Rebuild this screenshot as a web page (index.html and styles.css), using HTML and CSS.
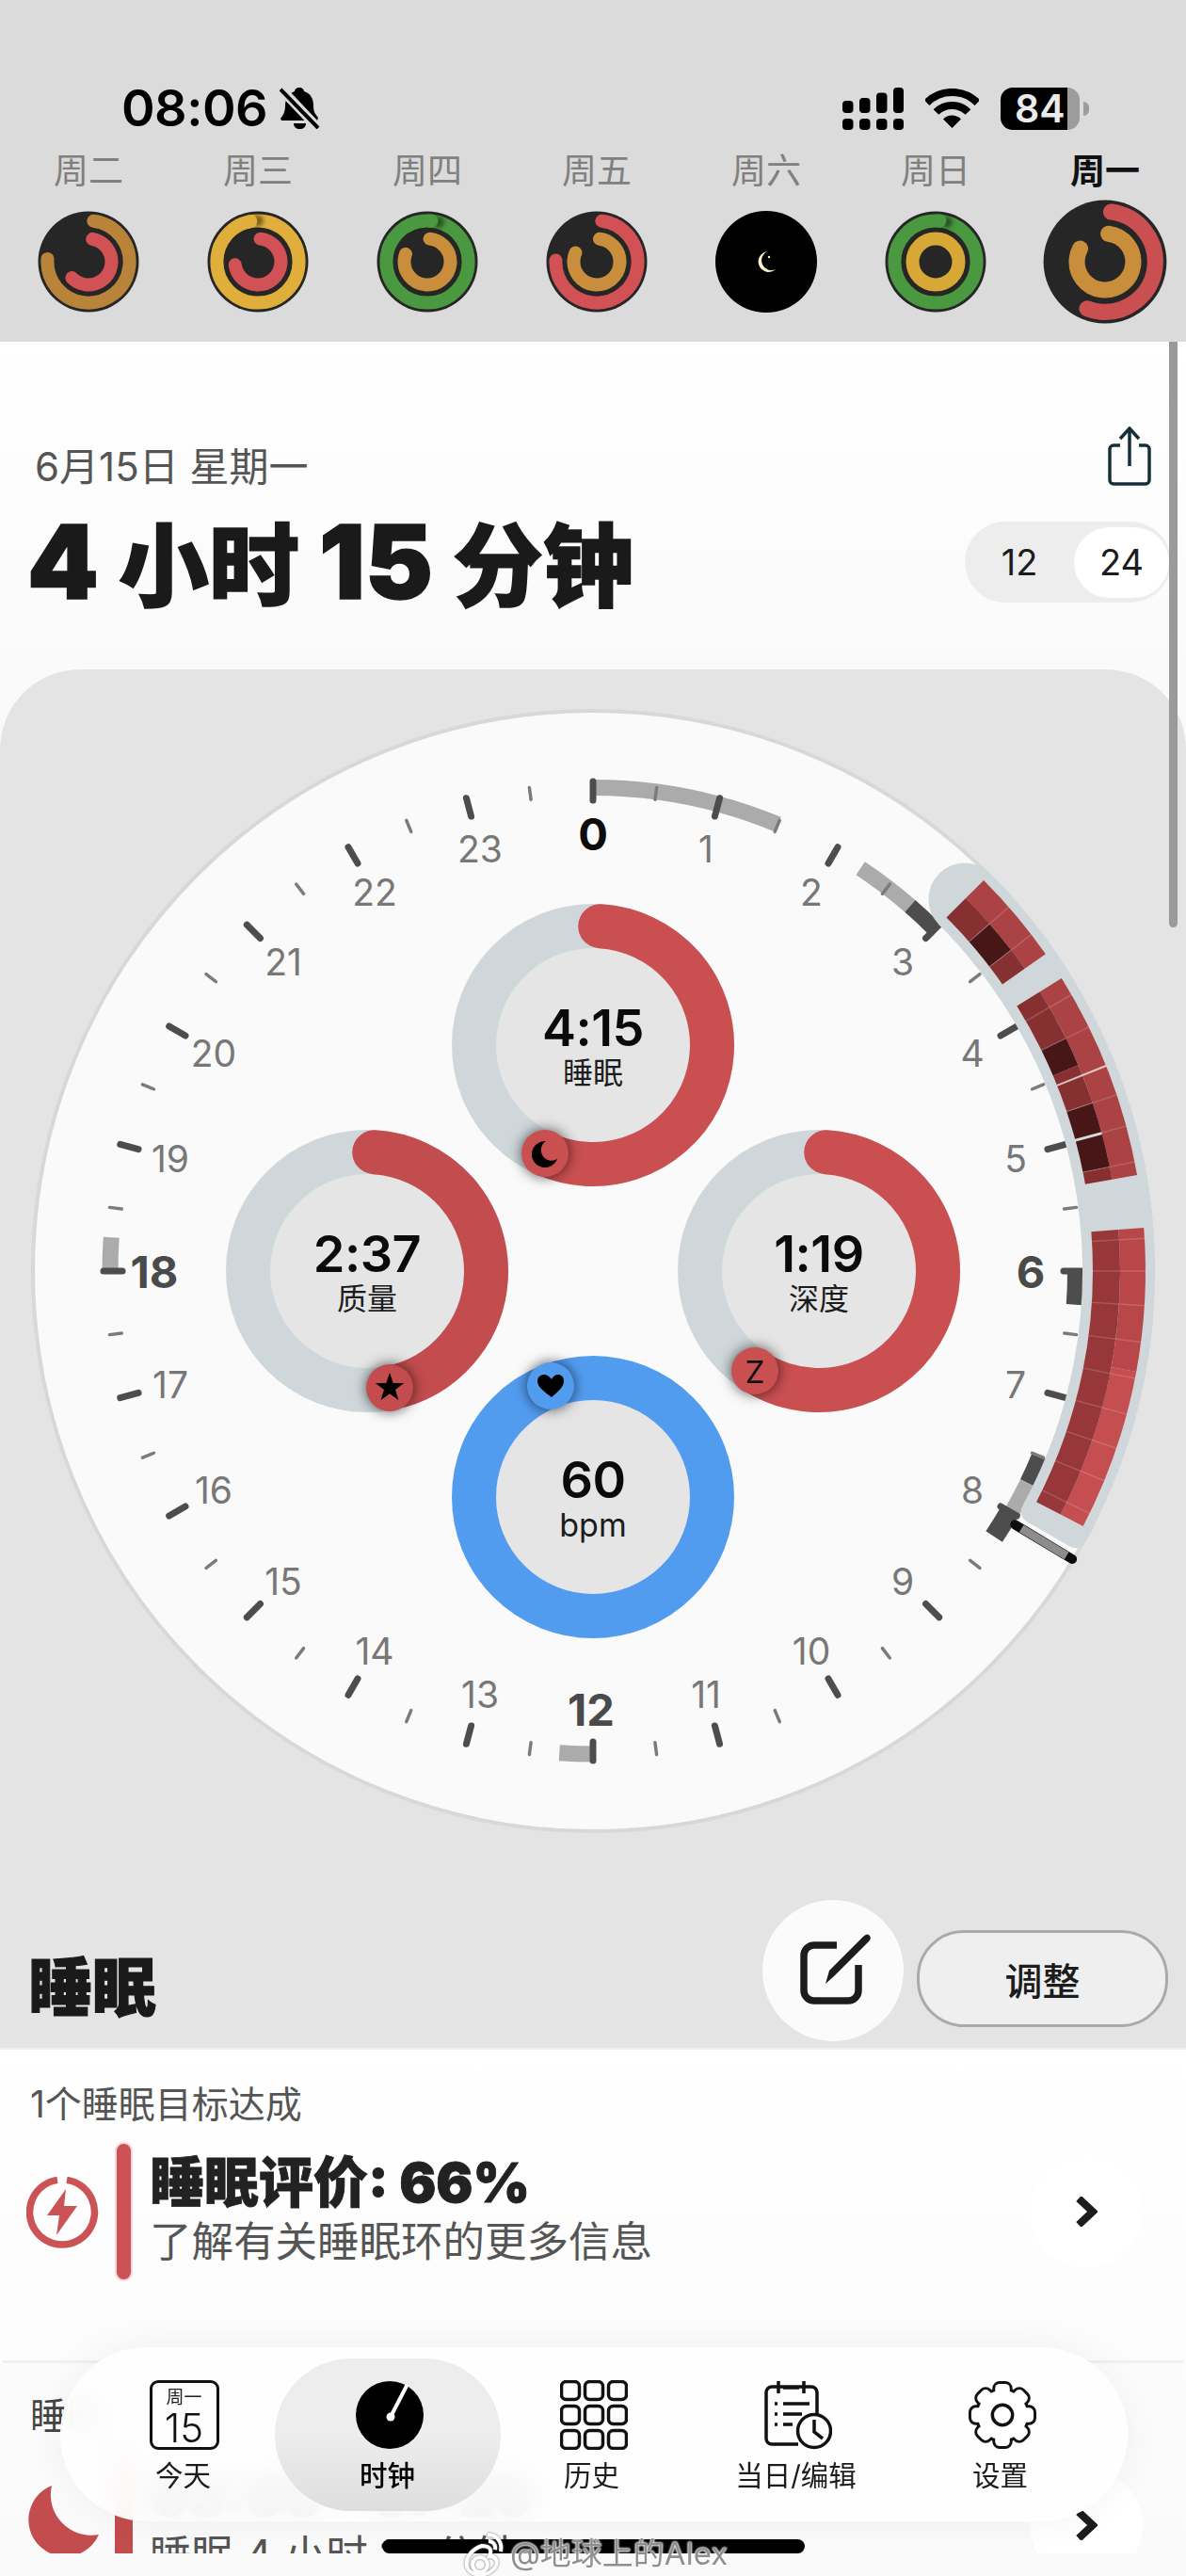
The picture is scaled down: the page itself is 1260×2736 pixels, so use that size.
FILE: index.html
```html
<!DOCTYPE html>
<html lang="zh-CN">
<head>
<meta charset="utf-8">
<title>睡眠</title>
<link rel="stylesheet" href="styles.css">
</head>
<body>
<div class="page">
  <header class="top">
    <div class="status">
      <div class="status-left">
        <span class="time">08:06</span>
        <svg class="bell" viewBox="0 0 43 44"><path class="fill-k" d="M21 0c3 0 5 2 5 4 7 2 10 8 10 15 0 7 2 9 5 13l-1 3H2l-1-2c2-3 5-6 5-14 0-7 4-13 10-15 0-2 2-4 5-4z"/><path class="fill-k" d="M15 38h13c0 4-3 6-6.500 6S15 42 15 38z"/><line class="slash-bg" x1="2" y1="2" x2="40" y2="42"/><line class="slash" x1="1" y1="2" x2="41" y2="43"/></svg>
      </div>
      <div class="status-right">
        <svg class="signal" viewBox="0 0 65 45"><rect class="fill-k" x="0" y="14" width="11.500" height="13" rx="4"/><rect class="fill-k" x="18" y="11" width="11.500" height="16" rx="4"/><rect class="fill-k" x="36" y="5.500" width="11.500" height="21.500" rx="4"/><rect class="fill-k" x="54" y="0" width="11" height="27" rx="4"/><rect class="fill-k" x="0" y="33" width="11.500" height="12" rx="4"/><rect class="fill-k" x="18" y="33" width="11.500" height="12" rx="4"/><rect class="fill-k" x="36" y="33" width="11.500" height="12" rx="4"/><rect class="fill-k" x="54" y="33" width="11" height="12" rx="4"/></svg>
        <svg class="wifi" viewBox="0 0 57 42"><path class="wifi-arc" d="M1.600 15.100A38 38 0 0 1 55.400 15.100"/><path class="wifi-arc" d="M11.500 25A24 24 0 0 1 45.500 25"/><path class="fill-k" d="M28.500 42L19 32.500A13.400 13.400 0 0 1 38 32.500Z"/></svg>
        <div class="battery"><span>84</span></div>
      </div>
    </div>
    <div class="week">
      <div class="day"><span class="day-name">周二</span><div class="ring-box"><svg class="ring" viewBox="-54 -54 108 108"><circle class="ring-bg" r="53.500"/><circle class="m-stroke c-brown" r="43.600" pathLength="360" stroke-dasharray="267 720" transform="rotate(-83)"/><circle class="m-stroke c-red" r="24.500" pathLength="360" stroke-dasharray="216 720" transform="rotate(-80)"/></svg></div></div>
      <div class="day"><span class="day-name">周三</span><div class="ring-box"><svg class="ring" viewBox="-54 -54 108 108"><circle class="ring-bg" r="53.500"/><circle class="m-full c-yellow" r="43.600"/><circle class="seam" cx="0" cy="-43.600" r="6"/><circle class="m-stroke c-yellow" r="43.600" pathLength="360" stroke-dasharray="4 720" transform="rotate(-104)"/><circle class="m-stroke c-red" r="24.500" pathLength="360" stroke-dasharray="256 720" transform="rotate(-84)"/></svg></div></div>
      <div class="day"><span class="day-name">周四</span><div class="ring-box"><svg class="ring" viewBox="-54 -54 108 108"><circle class="ring-bg" r="53.500"/><circle class="m-full c-green" r="43.600"/><circle class="seam" cx="12" cy="-42" r="6"/><circle class="m-stroke c-green" r="43.600" pathLength="360" stroke-dasharray="4 720" transform="rotate(-88)"/><circle class="m-stroke c-orange" r="24.500" pathLength="360" stroke-dasharray="284 720" transform="rotate(-84)"/></svg></div></div>
      <div class="day"><span class="day-name">周五</span><div class="ring-box"><svg class="ring" viewBox="-54 -54 108 108"><circle class="ring-bg" r="53.500"/><circle class="m-stroke c-red" r="43.600" pathLength="360" stroke-dasharray="265 720" transform="rotate(-83)"/><circle class="m-stroke c-orange" r="24.500" pathLength="360" stroke-dasharray="286 720" transform="rotate(-83)"/></svg></div></div>
      <div class="day"><span class="day-name">周六</span><div class="ring-box"><svg class="ring" viewBox="-54 -54 108 108"><circle class="ring-night" r="54"/><path class="moon-mini" d="M1 -11A11 11 0 1 0 10 8A9.500 9.500 0 0 1 1 -11Z"/><circle class="moon-mini" cx="3" cy="-5" r="1.200"/></svg></div></div>
      <div class="day"><span class="day-name">周日</span><div class="ring-box"><svg class="ring" viewBox="-54 -54 108 108"><circle class="ring-bg" r="53.500"/><circle class="m-full c-green" r="43.600"/><circle class="seam" cx="12" cy="-42" r="6"/><circle class="m-stroke c-green" r="43.600" pathLength="360" stroke-dasharray="4 720" transform="rotate(-88)"/><circle class="m-full c-gold" r="24.500"/></svg></div></div>
      <div class="day"><span class="day-name today">周一</span><div class="ring-box"><svg class="ring big" viewBox="-54 -54 108 108"><circle class="ring-bg" r="53.500"/><circle class="m-stroke c-red2" r="43.600" pathLength="360" stroke-dasharray="194 720" transform="rotate(-83)"/><circle class="m-stroke c-orange" r="24.500" pathLength="360" stroke-dasharray="292 720" transform="rotate(-83)"/></svg></div></div>
    </div>
  </header>

  <section class="summary">
    <div class="summary-row">
      <span class="date">6月15日 星期一</span>
      <svg class="share" viewBox="0 0 46 63"><path class="line-share" d="M13 20H6a4 4 0 0 0-4 4V57a4 4 0 0 0 4 4H40a4 4 0 0 0 4-4V24a4 4 0 0 0-4-4H33"/><path class="line-share" d="M23 42V2M13 13L23 2L33 13"/></svg>
    </div>
    <div class="summary-row second">
      <h1 class="headline"><span class="num">4</span> 小时 <span class="num">15</span> 分钟</h1>
      <div class="toggle"><span>12</span><span class="on">24</span></div>
    </div>
  </section>

  <section class="card">
    <svg class="dial" viewBox="0 0 1260 1250">
      <defs>
        <g id="maj6"><line class="tick-maj" y1="-520" y2="-500"/><line class="tick-maj" y1="-520" y2="-500" transform="rotate(15)"/><line class="tick-maj" y1="-520" y2="-500" transform="rotate(30)"/><line class="tick-maj" y1="-520" y2="-500" transform="rotate(45)"/><line class="tick-maj" y1="-520" y2="-500" transform="rotate(60)"/><line class="tick-maj" y1="-520" y2="-500" transform="rotate(75)"/></g>
        <g id="min6"><line class="tick-min" y1="-518" y2="-505" transform="rotate(7.500)"/><line class="tick-min" y1="-518" y2="-505" transform="rotate(22.500)"/><line class="tick-min" y1="-518" y2="-505" transform="rotate(37.500)"/><line class="tick-min" y1="-518" y2="-505" transform="rotate(52.500)"/><line class="tick-min" y1="-518" y2="-505" transform="rotate(67.500)"/><line class="tick-min" y1="-518" y2="-505" transform="rotate(82.500)"/></g>
      </defs>
      <g transform="translate(630 639)">
        <circle class="dial-face" r="595"/>

        <circle class="band b-gray" r="513.500" pathLength="360" stroke-dasharray="22.500 720" transform="rotate(-90)"/>
        <circle class="band b-gray" r="513.500" pathLength="360" stroke-dasharray="7.400 720" transform="rotate(-56.400)"/>
        <circle class="band b-dark" r="513.500" pathLength="360" stroke-dasharray="4 720" transform="rotate(-49)"/>
        <circle class="band b-dark" r="512.500" pathLength="360" stroke-dasharray="4 720" transform="rotate(0)"/>
        <circle class="band b-dark" r="513.500" pathLength="360" stroke-dasharray="3.500 720" transform="rotate(22.500)"/>
        <circle class="band b-gray" r="513.500" pathLength="360" stroke-dasharray="4 720" transform="rotate(26)"/>
        <circle class="band b-dark wide" r="511" pathLength="360" stroke-dasharray="3.500 720" transform="rotate(30)"/>
        <circle class="band b-gray" r="513" pathLength="360" stroke-dasharray="4 720" transform="rotate(90)"/>
        <circle class="band b-gray" r="513" pathLength="360" stroke-dasharray="4 720" transform="rotate(180)"/>

        <use href="#maj6"/><use href="#maj6" transform="rotate(90)"/><use href="#maj6" transform="rotate(180)"/><use href="#maj6" transform="rotate(270)"/>
        <use href="#min6"/><use href="#min6" transform="rotate(90)"/><use href="#min6" transform="rotate(180)"/><use href="#min6" transform="rotate(270)"/>

        <circle class="track" r="558.500" pathLength="360" stroke-dasharray="73.500 720" transform="rotate(-45)"/>
        <circle class="track-fill" cx="394.900" cy="-394.900" r="38.500"/>
        <rect class="track-fill" x="-40" y="-597" width="40" height="77" rx="12" transform="rotate(120)"/>

        <circle class="seg o1" r="573.500" pathLength="360" stroke-dasharray="10 720" transform="rotate(-45)"/>
        <circle class="seg i-med" r="545.500" pathLength="360" stroke-dasharray="3.800 720" transform="rotate(-45)"/>
        <circle class="seg i-deep" r="545.500" pathLength="360" stroke-dasharray="3.700 720" transform="rotate(-41.200)"/>
        <circle class="seg i-med" r="545.500" pathLength="360" stroke-dasharray="2.500 720" transform="rotate(-37.500)"/>

        <circle class="seg o1" r="573.500" pathLength="360" stroke-dasharray="22 720" transform="rotate(-32)"/>
        <circle class="seg i-med" r="545.500" pathLength="360" stroke-dasharray="5.800 720" transform="rotate(-32)"/>
        <circle class="seg i-deep" r="545.500" pathLength="360" stroke-dasharray="3.200 720" transform="rotate(-26.200)"/>
        <circle class="seg i-med" r="545.500" pathLength="360" stroke-dasharray="4.400 720" transform="rotate(-23)"/>
        <circle class="seg i-deep" r="545.500" pathLength="360" stroke-dasharray="3.300 720" transform="rotate(-18.600)"/>
        <circle class="seg i-deep" r="545.500" pathLength="360" stroke-dasharray="3.600 720" transform="rotate(-15)"/>
        <circle class="seg i-med" r="545.500" pathLength="360" stroke-dasharray="1.400 720" transform="rotate(-11.400)"/>

        <circle class="seg o2" r="573.500" pathLength="360" stroke-dasharray="15 720" transform="rotate(-4.500)"/>
        <circle class="seg o3" r="573.500" pathLength="360" stroke-dasharray="17 720" transform="rotate(10.500)"/>
        <circle class="seg i-warm" r="545.500" pathLength="360" stroke-dasharray="32 720" transform="rotate(-4.500)"/>

        <g class="seps">
          <line y1="-587" y2="-531" transform="rotate(48.800)"/><line y1="-587" y2="-531" transform="rotate(52.500)"/>
          <line y1="-587" y2="-531" transform="rotate(60)"/><line y1="-587" y2="-531" transform="rotate(63.800)"/><line class="sep-strong" y1="-587" y2="-531" transform="rotate(68.200)"/><line y1="-587" y2="-531" transform="rotate(71.400)"/><line y1="-587" y2="-531" transform="rotate(74.800)"/><line y1="-587" y2="-531" transform="rotate(78.600)"/>
          <line y1="-587" y2="-531" transform="rotate(86.600)"/><line y1="-587" y2="-531" transform="rotate(90)"/><line y1="-587" y2="-531" transform="rotate(93.600)"/><line y1="-587" y2="-531" transform="rotate(97.400)"/><line y1="-587" y2="-531" transform="rotate(101.200)"/><line y1="-587" y2="-531" transform="rotate(105)"/><line y1="-587" y2="-531" transform="rotate(108.700)"/><line y1="-587" y2="-531" transform="rotate(112.300)"/><line y1="-587" y2="-531" transform="rotate(116)"/>
        </g>

        <g transform="rotate(121)"><line class="handle-out" y1="-523" y2="-594"/><line class="handle-in" y1="-531" y2="-587"/></g>

        <g class="hours">
          <text class="h-main h-black" x="0" y="-465">0</text><text x="120" y="-449">1</text><text x="232" y="-403">2</text><text x="329" y="-329">3</text><text x="403" y="-232">4</text><text x="449" y="-120">5</text><text class="h-main" x="465" y="0">6</text><text x="449" y="120">7</text><text x="403" y="232">8</text><text x="329" y="329">9</text><text x="232" y="403">10</text><text x="120" y="449">11</text><text class="h-main" x="-2" y="465">12</text><text x="-120" y="449">13</text><text x="-232" y="403">14</text><text x="-329" y="329">15</text><text x="-403" y="232">16</text><text x="-449" y="120">17</text><text class="h-main" x="-466" y="0">18</text><text x="-449" y="-120">19</text><text x="-403" y="-232">20</text><text x="-329" y="-329">21</text><text x="-232" y="-403">22</text><text x="-120" y="-449">23</text>
        </g>

        <g transform="translate(0 -240)">
          <circle class="gauge" r="126.500"/>
          <circle class="arc arc-red" r="126.500" pathLength="360" stroke-dasharray="200 720" transform="rotate(-86.500)"/>
          <text class="g-val" y="-19">4:15</text><text class="g-lab" y="27">睡眠</text>
          <g class="badge" transform="translate(-51 115)"><circle class="bd-red" r="25"/><path class="fill-k" d="M1 -13A14 14 0 1 0 13 6A11 11 0 0 1 1 -13Z"/></g>
        </g>
        <g transform="translate(-240 0)">
          <circle class="gauge" r="126.500"/>
          <circle class="arc arc-red2" r="126.500" pathLength="360" stroke-dasharray="165.500 720" transform="rotate(-86.500)"/>
          <text class="g-val" y="-19">2:37</text><text class="g-lab" y="27">质量</text>
          <g class="badge" transform="translate(24 124)"><circle class="bd-red2" r="25"/><polygon class="fill-k" points="0,-16 3.700,-5.100 15.200,-4.900 6,2 9.400,12.900 0,6.300 -9.400,12.900 -6,2 -15.200,-4.900 -3.700,-5.100"/></g>
        </g>
        <g transform="translate(240 0)">
          <circle class="gauge" r="126.500"/>
          <circle class="arc arc-red" r="126.500" pathLength="360" stroke-dasharray="209.300 720" transform="rotate(-86.500)"/>
          <text class="g-val" y="-19">1:19</text><text class="g-lab" y="27">深度</text>
          <g class="badge" transform="translate(-68 106)"><circle class="bd-red" r="25"/><text class="bd-z" y="1">Z</text></g>
        </g>
        <g transform="translate(0 240)">
          <circle class="gauge gauge-blue" r="126.500"/>
          <text class="g-val" y="-19">60</text><text class="g-lab g-unit" y="29">bpm</text>
          <g class="badge" transform="translate(-45 -118)"><circle class="bd-blue" r="25"/><path class="fill-k" d="M1 12C-7 6-14 1-14-5C-14-10-10-12-7-12C-4-12-1-10 1-7C2-10 5-12 8-12C11-12 14-10 14-5C14 1 8 6 1 12Z"/></g>
        </g>
      </g>
    </svg>
    <div class="card-row">
      <h2 class="card-title">睡眠</h2>
      <button class="edit-btn"><svg class="edit-icon" viewBox="0 0 80 80"><path class="line-edit" d="M42 13H18a11 11 0 0 0-11 11V61a11 11 0 0 0 11 11H54a11 11 0 0 0 11-11V34"/><path class="fill-ink" d="M30 54L34 40L71 3Q75 0 77 3Q79 6 76 9L39 46Z"/></svg></button>
      <button class="adjust-btn">调整</button>
    </div>
  </section>

  <section class="list">
    <div class="list-head">1个睡眠目标达成</div>
    <div class="list-row">
      <svg class="row-icon" viewBox="0 0 77 77"><path class="line-bolt" d="M43 4.400A34.500 34.500 0 1 1 33 4.400"/><polygon class="fill-red" points="42,14 22,42 35,42 32,63 54,32 40,32"/></svg>
      <span class="row-bar"></span>
      <div class="row-text"><div class="row-title">睡眠评价: 66%</div><div class="row-sub">了解有关睡眠环的更多信息</div></div>
      <div class="row-go"><svg class="chev" viewBox="0 0 24 32"><polyline class="line-chev" points="4,2 19,16 4,30"/></svg></div>
    </div>
    <div class="list-head second">睡眠</div>
    <div class="list-row">
      <svg class="row-icon moon-big" viewBox="0 0 80 80"><path class="fill-red2" d="M27 2A39 39 0 1 0 77 54A43 43 0 0 1 27 2Z"/></svg>
      <span class="row-bar dark"></span>
      <div class="row-text"><div class="row-title">03:00 - 07:20</div><div class="row-sub">睡眠 4 小时 15 分钟</div></div>
      <div class="row-go"><svg class="chev" viewBox="0 0 24 32"><polyline class="line-chev" points="4,2 19,16 4,30"/></svg></div>
    </div>
  </section>

  <nav class="nav">
    <div class="nav-item">
      <div class="cal"><span class="cal-day">周一</span><span class="cal-num">15</span></div>
      <span class="nav-label">今天</span>
    </div>
    <div class="nav-item active">
      <svg class="nav-icon" viewBox="0 0 72 72"><circle class="fill-k" cx="36" cy="36" r="36"/><path class="line-hand" d="M38 36L54 5"/><circle class="fill-white" cx="37" cy="38" r="4.500"/></svg>
      <span class="nav-label strong">时钟</span>
    </div>
    <div class="nav-item">
      <svg class="nav-icon" viewBox="0 0 72 74"><g class="line-nav"><rect x="1.500" y="1.500" width="19" height="19" rx="5"/><rect x="26.500" y="1.500" width="19" height="19" rx="5"/><rect x="51.500" y="1.500" width="19" height="19" rx="5"/><rect x="1.500" y="27.500" width="19" height="19" rx="5"/><rect x="26.500" y="27.500" width="19" height="19" rx="5"/><rect x="51.500" y="27.500" width="19" height="19" rx="5"/><rect x="1.500" y="53.500" width="19" height="19" rx="5"/><rect x="26.500" y="53.500" width="19" height="19" rx="5"/><rect x="51.500" y="53.500" width="19" height="19" rx="5"/></g></svg>
      <span class="nav-label">历史</span>
    </div>
    <div class="nav-item">
      <svg class="nav-icon" viewBox="0 0 72 74"><g class="line-nav"><path d="M36 68H8a6 6 0 0 1-6-6V13a6 6 0 0 1 6-6H50a6 6 0 0 1 6 6V36"/><path d="M15 1V14M42 1V14M20 8H37"/><path d="M11 25H14M20 25H48M11 36H14M20 36H40M11 47H14M20 47H30"/><circle cx="53" cy="54" r="17.500"/><path d="M53 42V55L62 62"/></g></svg>
      <span class="nav-label">当日/编辑</span>
    </div>
    <div class="nav-item">
      <svg class="nav-icon" viewBox="-37 -37 74 74">
        <defs><g id="gear-shape"><circle r="27"/><rect x="-8" y="-34" width="16" height="14" rx="5"/><rect x="-8" y="-34" width="16" height="14" rx="5" transform="rotate(45)"/><rect x="-8" y="-34" width="16" height="14" rx="5" transform="rotate(90)"/><rect x="-8" y="-34" width="16" height="14" rx="5" transform="rotate(135)"/><rect x="-8" y="-34" width="16" height="14" rx="5" transform="rotate(180)"/><rect x="-8" y="-34" width="16" height="14" rx="5" transform="rotate(225)"/><rect x="-8" y="-34" width="16" height="14" rx="5" transform="rotate(270)"/><rect x="-8" y="-34" width="16" height="14" rx="5" transform="rotate(315)"/></g></defs>
        <use class="gear-out" href="#gear-shape"/><use class="gear-in" href="#gear-shape"/><circle class="gear-hub" r="11"/>
      </svg>
      <span class="nav-label">设置</span>
    </div>
  </nav>

  <div class="home-bar"></div>
  <div class="watermark">
    <svg class="wb" viewBox="0 0 44 56"><path class="wb-line" d="M20 20C8 24 2 34 4 42C7 52 24 54 33 44C39 37 34 30 28 31C32 22 26 20 20 20Z"/><circle class="wb-line" cx="18" cy="40" r="8"/><path class="wb-line" d="M26 8C36 8 42 16 40 26M27 15C32 15 35 19 34 24"/></svg>
    <span>@地球上的Alex</span>
  </div>
  <div class="scrollbar"></div>
</div>
</body>
</html>
```

FILE: styles.css
```css
* { box-sizing: border-box; }
html, body { margin: 0; padding: 0; }
body {
  width: 1260px;
  height: 2736px;
  overflow: hidden;
  background: #fafafa;
  font-family: "Inter", "Noto Sans CJK SC", sans-serif;
  color: #1c1c1c;
}
.page { position: relative; width: 1260px; height: 2736px; overflow: hidden; }

/* SVG helpers */
.fill-k { fill: #000; }
.fill-white { fill: #fff; }
.fill-red { fill: #cb5355; }
.fill-red2 { fill: #c24c4e; }
.fill-ink { fill: #1c1c1c; }

/* header */
.top { height: 363px; background: #dbdbdb; padding-top: 85px; }
.status { display: flex; justify-content: space-between; align-items: center; height: 60px; padding: 0 113px 0 129px; }
.status-left, .status-right { display: flex; align-items: center; }
.time { font-size: 54px; font-weight: 600; line-height: 60px; color: #000; letter-spacing: -.5px; }
.bell { width: 43px; height: 44px; margin-left: 13px; }
.slash { stroke: #000; stroke-width: 4; }
.slash-bg { stroke: #dbdbdb; stroke-width: 10; }
.signal { width: 65px; height: 45px; }
.wifi { width: 57px; height: 42px; margin-left: 23px; }
.wifi-arc { fill: none; stroke: #000; stroke-width: 8; }
.battery {
  position: relative;
  width: 84px; height: 45px; margin-left: 23px;
  border-radius: 13px;
  background: linear-gradient(90deg, #000 0, #000 84.500%, #9c9c9c 84.500%);
  color: #ebebeb; font-size: 41px; font-weight: 600; line-height: 45px;
  padding-left: 15px;
}
.battery::after {
  content: ""; position: absolute; right: -10px; top: 15px;
  width: 6px; height: 15px; border-radius: 0 6px 6px 0; background: #9c9c9c;
}
.week { display: grid; grid-template-columns: repeat(7, 180px); padding-left: 4px; margin-top: 15px; }
.day { display: flex; flex-direction: column; align-items: center; }
.day-name { font-size: 37px; line-height: 44px; color: #808080; }
.day-name.today { color: #111; font-weight: 700; }
.ring-box { height: 132px; margin-top: 8px; display: flex; align-items: center; justify-content: center; }
.ring { width: 108px; height: 108px; display: block; }
.ring.big { width: 132px; height: 132px; }
.ring-bg { fill: #262626; }
.ring-night { fill: #000; }
.moon-mini { fill: #f7f1c9; }
.m-stroke { fill: none; stroke-width: 14; stroke-linecap: round; }
.m-full { fill: none; stroke-width: 14; }
.seam { fill: #000; opacity: .45; filter: blur(2px); }
.c-brown { stroke: #b9833a; }
.c-red { stroke: #d15154; }
.c-red2 { stroke: #c94f51; }
.c-yellow { stroke: #e0ae3b; }
.c-green { stroke: #4a983f; }
.c-orange { stroke: #c88e3c; }
.c-gold { stroke: #d7a835; }

/* summary */
.summary { height: 348px; padding: 90px 16px 0 32px; background: linear-gradient(#fff, #fafafa); }
.summary-row { display: flex; justify-content: space-between; align-items: flex-end; padding-right: 21px; }
.summary-row.second { align-items: center; margin-top: 27px; padding-right: 0; }
.date { font-size: 42px; line-height: 40px; color: #555; margin-left: 5px; }
.share { width: 46px; height: 63px; }
.line-share { fill: none; stroke: #15303a; stroke-width: 3.500; }
.headline { margin: 4px 0 0 -3px; font-size: 96px; line-height: 100px; font-weight: 900; color: #1a1a1a; -webkit-text-stroke: 1.500px #1a1a1a; word-spacing: 2px; }
.headline .num { font-size: 108px; }
.toggle { display: grid; grid-template-columns: 116px 101px; align-items: center; width: 219px; height: 86px; border-radius: 43px; background: #ededed; font-size: 38px; text-align: center; color: #1c1c1c; }
.toggle .on { height: 75px; line-height: 75px; background: #fff; border-radius: 38px; }

/* card */
.card { height: 1466px; background: #e4e4e4; border-radius: 85px 85px 0 0; border-bottom: 2px solid #f0f0f0; }
.dial { display: block; width: 1260px; height: 1250px; }
.dial-face { fill: #fafafa; stroke: #d8d8d8; stroke-width: 4; }
.band { fill: none; stroke-width: 17; }
.band.wide { stroke-width: 21; }
.b-gray { stroke: #ababab; }
.b-dark { stroke: #4d4d4d; }
.tick-maj { stroke: #4d4d4d; stroke-width: 7; stroke-linecap: round; }
.tick-min { stroke: #7b7b7b; stroke-width: 3.500; stroke-linecap: round; }
.track { fill: none; stroke: #cfd7da; stroke-width: 77; }
.track-fill { fill: #cfd7da; }
.seg { fill: none; }
.o1, .o2, .o3 { stroke-width: 27; }
.o1 { stroke: #ab4244; }
.o2 { stroke: #b9474a; }
.o3 { stroke: #c44e50; }
.i-med, .i-deep, .i-warm { stroke-width: 29; }
.i-med { stroke: #873032; }
.i-deep { stroke: #471617; }
.i-warm { stroke: #973739; }
.seps line { stroke: rgba(255, 255, 255, .16); stroke-width: 1.500; }
.seps .sep-strong { stroke: rgba(255, 255, 255, .7); stroke-width: 2; }
.handle-out { stroke: #0c0c0c; stroke-width: 10; stroke-linecap: round; }
.handle-in { stroke: #8c8c8c; stroke-width: 9; }
.hours text { font-size: 39px; fill: #777; text-anchor: middle; dominant-baseline: central; font-family: "Inter", sans-serif; }
.hours .h-main { font-size: 47px; font-weight: 700; fill: #4a4a4a; }
.hours .h-black { fill: #0c0c0c; }
.gauge { fill: #e5e5e5; stroke: #cfd7da; stroke-width: 47; }
.gauge-blue { stroke: #529cf0; }
.arc { fill: none; stroke-width: 47; stroke-linecap: round; }
.arc-red { stroke: #ca4f51; }
.arc-red2 { stroke: #c24c4e; }
.g-val { font-size: 54px; font-weight: 600; fill: #0a0a0a; text-anchor: middle; dominant-baseline: central; letter-spacing: -.5px; }
.g-lab { font-size: 32px; fill: #1c1c1c; text-anchor: middle; dominant-baseline: central; font-family: "Noto Sans CJK SC", sans-serif; }
.g-unit { font-family: "Inter", sans-serif; font-size: 34px; }
.badge { filter: drop-shadow(0 0 7px rgba(0, 0, 0, .65)); }
.bd-red { fill: #ca4f51; }
.bd-red2 { fill: #c24c4e; }
.bd-blue { fill: #529cf0; }
.bd-z { font-size: 33px; fill: #111; text-anchor: middle; dominant-baseline: central; }
.card-row { display: flex; height: 150px; margin-top: 57px; padding: 0 19px 0 30px; }
.card-title { margin: 0 auto 25px 0; align-self: flex-end; font-size: 68px; line-height: 64px; font-weight: 900; color: #1a1a1a; -webkit-text-stroke: 1.200px #1a1a1a; }
.edit-btn { width: 150px; height: 150px; padding: 0; border: 0; border-radius: 50%; background: #fbfbfb; display: flex; align-items: center; justify-content: center; }
.edit-icon { width: 80px; height: 80px; margin-left: 3px; }
.line-edit { fill: none; stroke: #1c1c1c; stroke-width: 7.500; }
.adjust-btn { align-self: flex-end; width: 267px; height: 103px; margin: 0 0 15px 14px; padding: 0; border: 3px solid #aaa; border-radius: 50px; background: #efefef; font-family: "Noto Sans CJK SC", sans-serif; font-size: 40px; font-weight: 500; color: #1c1c1c; }

/* list */
.list { height: 535px; overflow: hidden; background: linear-gradient(#fff, #fafafa); }
.list-head { padding-left: 32px; font-size: 39px; line-height: 58px; margin-top: 29px; margin-bottom: 11px; color: #555; }
.list-head.second { position: relative; margin-top: 84px; padding-top: 30px; margin-bottom: 13px; box-sizing: content-box; color: #444; }
.list-head.second::before { content: ""; position: absolute; left: 3px; right: 3px; top: 0; height: 3px; background: #f0f0f0; }
.list-row { display: flex; align-items: center; height: 148px; padding: 0 46px 0 28px; }
.row-icon { width: 77px; height: 77px; flex: none; }
.moon-big { width: 80px; height: 80px; align-self: flex-start; margin-top: 30px; }
.line-bolt { fill: none; stroke: #cb5355; stroke-width: 7.500; }
.row-bar { width: 19px; height: 148px; flex: none; margin-left: 17px; border-radius: 10px; background: #cb5355; border: 2px solid #f6d8d8; }
.row-bar.dark { margin-left: 14px; background: #c24c4e; border-color: #c24c4e; border-radius: 0; }
.row-text { flex: 1; margin-left: 18px; }
.row-title { font-size: 58px; line-height: 63px; font-weight: 900; color: #222; -webkit-text-stroke: .8px #222; }
.row-sub { font-size: 44.500px; line-height: 62px; color: #555; }
.row-go { width: 120px; height: 120px; border-radius: 50%; background: #fff; display: flex; align-items: center; justify-content: center; }
.chev { width: 24px; height: 32px; }
.line-chev { fill: none; stroke: #1c1c1c; stroke-width: 8; }

/* bottom bar */
.nav {
  position: absolute; left: 64px; top: 2493px;
  width: 1134px; height: 185px;
  padding: 35px 0 0 22px;
  display: grid; grid-template-columns: repeat(5, 217px);
  border-radius: 92px;
  background: rgba(254, 254, 254, .94);
  backdrop-filter: blur(14px);
  box-shadow: 0 0 40px rgba(0, 0, 0, .05);
}
.nav-item { position: relative; display: flex; flex-direction: column; align-items: center; }
.nav-item.active::before {
  content: ""; position: absolute; left: -11px; top: -23px;
  width: 240px; height: 162px; border-radius: 81px;
  background: linear-gradient(#ededed 50%, #dedede);
}
.nav-icon, .cal, .nav-label { position: relative; }
.nav-icon { width: 72px; height: 74px; display: block; margin-left: 4px; }
.nav-label { margin-top: 7px; font-size: 29.500px; line-height: 40px; color: #1c1c1c; white-space: nowrap; }
.nav-label.strong { font-weight: 500; color: #000; }
.cal { width: 74px; height: 74px; margin-left: 2px; border: 3.500px solid #111; border-radius: 9px; display: flex; flex-direction: column; align-items: center; }
.cal-day { font-size: 19px; line-height: 24px; margin-top: 4px; color: #222; }
.cal-num { font-size: 42px; line-height: 40px; font-weight: 300; color: #111; }
.line-nav { fill: none; stroke: #111; stroke-width: 3.500; }
.line-hand { fill: none; stroke: #fff; stroke-width: 4; stroke-linecap: round; }
.gear-out { fill: #111; stroke: #111; stroke-width: 6; }
.gear-in { fill: #fff; }
.gear-hub { fill: #fff; stroke: #111; stroke-width: 3.500; }

.home-bar { position: absolute; left: 406px; top: 2697px; width: 449px; height: 15px; border-radius: 8px; background: #000; }
.watermark { position: absolute; left: 492px; top: 2684px; display: flex; align-items: center; gap: 6px; color: #8f8f8f; font-size: 33px; line-height: 44px; text-shadow: 0 0 2px #fff, 0 0 2px #fff, 0 0 3px #fff; }
.wb { width: 44px; height: 56px; filter: drop-shadow(0 0 1px #666); }
.wb-line { fill: none; stroke: #fff; stroke-width: 4; }
.scrollbar { position: absolute; left: 1242px; top: 363px; width: 9px; height: 622px; border-radius: 0 0 5px 5px; background: #9a9a9a; }
```
